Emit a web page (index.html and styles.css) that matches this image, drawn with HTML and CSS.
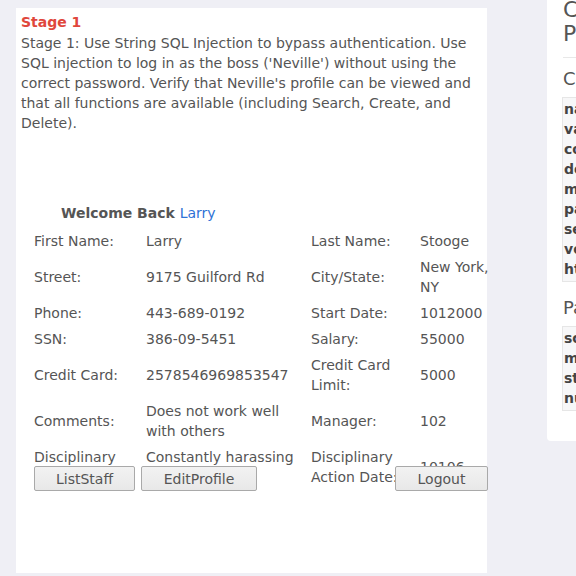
FILE: index.html
```html
<!DOCTYPE html>
<html>
<head>
<meta charset="utf-8">
<link rel="stylesheet" href="styles.css">
</head>
<body>
<div class="page">
  <div class="lesson">
    <div class="stage-title">Stage 1</div>
    <div class="stage-desc">Stage 1: Use String SQL Injection to bypass authentication. Use SQL injection to log in as the boss ('Neville') without using the correct password. Verify that Neville's profile can be viewed and that all functions are available (including Search, Create, and Delete).</div>
    <div class="welcome">Welcome Back <span class="user">Larry</span></div>
    <div class="profile-wrap">
      <table class="profile">
        <colgroup>
          <col class="c1"><col class="c2"><col class="c3"><col class="c4">
        </colgroup>
        <tr><td>First Name:</td><td>Larry</td><td>Last Name:</td><td>Stooge</td></tr>
        <tr><td>Street:</td><td>9175 Guilford Rd</td><td>City/State:</td><td>New York, NY</td></tr>
        <tr><td>Phone:</td><td>443-689-0192</td><td>Start Date:</td><td>1012000</td></tr>
        <tr><td>SSN:</td><td>386-09-5451</td><td>Salary:</td><td>55000</td></tr>
        <tr><td>Credit Card:</td><td>2578546969853547</td><td>Credit Card Limit:</td><td>5000</td></tr>
        <tr><td>Comments:</td><td>Does not work well with others</td><td>Manager:</td><td>102</td></tr>
        <tr><td>Disciplinary Explanation:</td><td>Constantly harassing coworkers</td><td>Disciplinary Action Date:</td><td>10106</td></tr>
      </table>
    </div>
    <div class="actions">
      <button class="btn btn-list">ListStaff</button>
      <button class="btn btn-edit">EditProfile</button>
      <button class="btn btn-logout">Logout</button>
    </div>
  </div>
  <div class="side">
    <div class="side-title">Cookies / Parameters</div>
    <div class="side-sub">Cookie</div>
    <div class="code-block">
      <div>name</div><div>value</div><div>comment</div><div>domain</div><div>maxAge</div><div>path</div><div>secure</div><div>version</div><div>httpOnly</div>
    </div>
    <div class="side-sub side-sub2">Params</div>
    <div class="code-block">
      <div>scr</div><div>menu</div><div>stage</div><div>num</div>
    </div>
  </div>
</div>
</body>
</html>
```
FILE: styles.css
```css
html, body {
  margin: 0;
  padding: 0;
  overflow: hidden;
  background: #efeff5;
  font-family: "DejaVu Sans", sans-serif;
  font-size: 14px;
  color: #555;
}
.page {
  display: flex;
  align-items: flex-start;
  padding-left: 16px;
  width: 800px;
}
.lesson {
  flex: none;
  width: 461px;
  height: 557px;
  margin-top: 8px;
  padding: 4px 5px 4px 5px;
  background: #fff;
  line-height: 20px;
}
.stage-title {
  color: #e0473c;
  font-weight: bold;
}
.stage-desc {
  margin-top: 1px;
}
.welcome {
  margin-top: 70px;
  padding-left: 40px;
  font-weight: bold;
}
.user {
  color: #2f72d6;
  font-weight: normal;
}
.profile-wrap {
  height: 238px;
  margin-top: 5px;
  margin-left: 13px;
}
.profile {
  border-collapse: collapse;
  table-layout: fixed;
  width: 458px;
}
.profile .c1 { width: 112px; }
.profile .c2 { width: 165px; }
.profile .c3 { width: 109px; }
.profile .c4 { width: 72px; }
.profile td {
  padding: 3px 0;
  vertical-align: middle;
  line-height: 20px;
}
.actions {
  display: flex;
  margin-left: 13px;
}
.btn {
  flex: none;
  box-sizing: border-box;
  height: 25px;
  font-family: "DejaVu Sans", sans-serif;
  font-size: 14px;
  line-height: 18px;
  color: #555;
  padding: 3px 0 2px;
  text-align: center;
  border: 1px solid #a9a9a9;
  border-radius: 2px;
  background: linear-gradient(#f2f2f2, #e8e8e8);
}
.btn-list { width: 101px; }
.btn-edit { width: 116px; margin-left: 6px; }
.btn-logout { width: 93px; margin-left: 138px; }
.side {
  flex: none;
  margin-left: 60px;
  width: 200px;
  padding: 0 15px 30px 16px;
  background: #fff;
  border-radius: 0 0 4px 4px;
}
.side-title {
  margin-top: -2px;
  font-size: 22px;
  line-height: 24px;
  width: 140px;
  padding-bottom: 11px;
  border-bottom: 1px solid #e8e8e8;
}
.side-sub {
  margin-top: 11px;
  font-size: 18px;
  line-height: 20px;
}
.side-sub2 { margin-top: 16px; }
.code-block {
  margin-top: 8px;
  margin-left: -1px;
  padding: 1px 1px 2px 1px;
  background: #f7f7f8;
  border: 1px solid #e6e6e6;
  font-weight: bold;
  line-height: 20px;
  color: #444;
}
```
